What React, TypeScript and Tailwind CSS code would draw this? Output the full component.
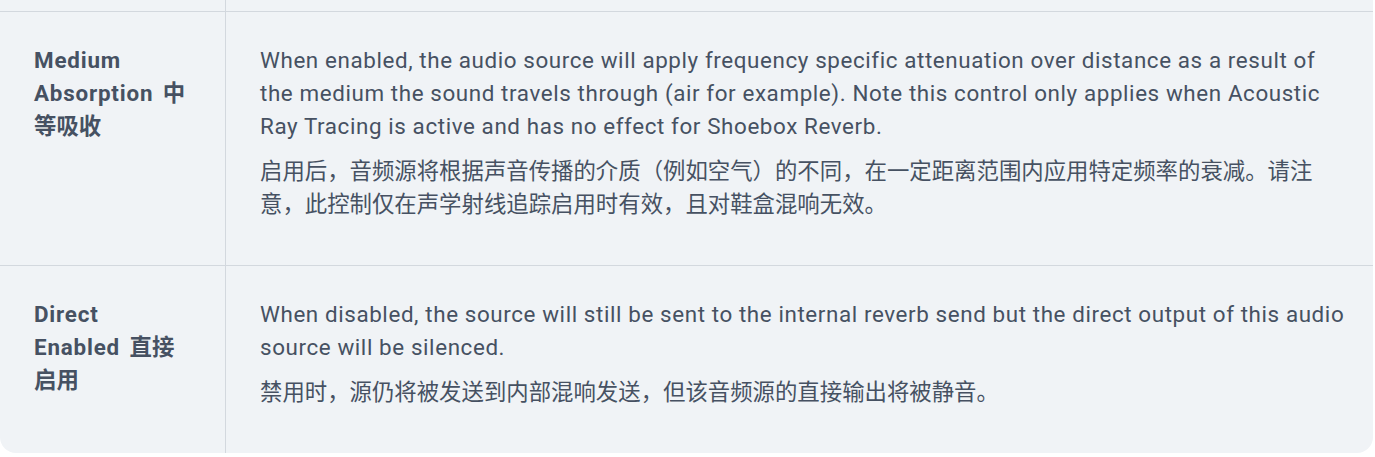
import React from 'react';

interface PropRow {
  label: string;
  labelZh: string;
  en: string;
  zh: string;
}

const rows: PropRow[] = [
  {
    label: 'Medium Absorption',
    labelZh: '中等吸收',
    en: 'When enabled, the audio source will apply frequency specific attenuation over distance as a result of the medium the sound travels through (air for example). Note this control only applies when Acoustic Ray Tracing is active and has no effect for Shoebox Reverb.',
    zh: '启用后，音频源将根据声音传播的介质（例如空气）的不同，在一定距离范围内应用特定频率的衰减。请注意，此控制仅在声学射线追踪启用时有效，且对鞋盒混响无效。',
  },
  {
    label: 'Direct Enabled',
    labelZh: '直接启用',
    en: 'When disabled, the source will still be sent to the internal reverb send but the direct output of this audio source will be silenced.',
    zh: '禁用时，源仍将被发送到内部混响发送，但该音频源的直接输出将被静音。',
  },
];

const font = { fontFamily: 'Roboto, "Noto Sans CJK SC", sans-serif' };

const App: React.FC = () => {
  return (
    <div className="w-[1373px] bg-white" style={font}>
      <div className="bg-[#f0f3f6] rounded-b-[16px] overflow-hidden text-[22.4px] leading-[33px] text-[#465162]">
        {/* tail of the previous row */}
        <div className="grid grid-cols-[226px_1fr] h-[12px] border-b border-[#d3d8de]">
          <div className="border-r border-[#d3d8de]" />
          <div />
        </div>

        {rows.map((row, i) => (
          <div
            key={row.label}
            className={`grid grid-cols-[226px_1fr] ${i < rows.length - 1 ? 'border-b border-[#d3d8de]' : ''}`}
          >
            <div className="border-r border-[#d3d8de] pl-[34px] pr-[36px] pt-[32px] pb-[32px] font-bold">
              <span className="tracking-[0.8px]">{row.label}</span> <span className="ml-[4px]">{row.labelZh}</span>
            </div>
            <div className="pl-[34px] pr-[20px] pt-[32px] pb-[32px]">
              <p className="mb-3 tracking-[0.6px]">{row.en}</p>
              <p className="mb-3">{row.zh}</p>
            </div>
          </div>
        ))}
      </div>
    </div>
  );
};

export default App;
